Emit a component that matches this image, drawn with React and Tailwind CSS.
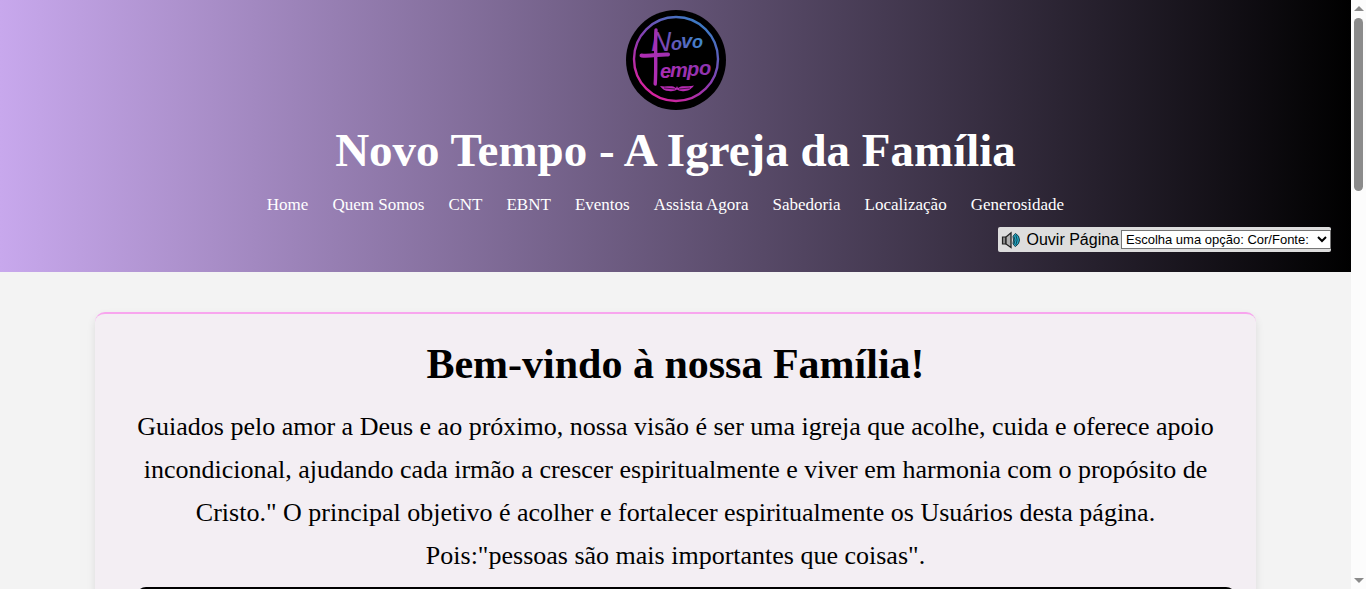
const links = [
  'Home',
  'Quem Somos',
  'CNT',
  'EBNT',
  'Eventos',
  'Assista Agora',
  'Sabedoria',
  'Localização',
  'Generosidade',
];

function Logo() {
  return (
    <svg viewBox="0 0 100 100" className="size-[100px]" role="img" aria-label="Novo Tempo">
      <defs>
        <linearGradient id="ring" gradientUnits="userSpaceOnUse" x1="28" y1="92" x2="78" y2="14">
          <stop offset="0" stopColor="#e0209c" />
          <stop offset="0.5" stopColor="#8a3bb0" />
          <stop offset="1" stopColor="#3a7cc4" />
        </linearGradient>
        <linearGradient id="novo" gradientUnits="userSpaceOnUse" x1="28" y1="44" x2="74" y2="28">
          <stop offset="0" stopColor="#9a2fae" />
          <stop offset="0.45" stopColor="#6458b8" />
          <stop offset="1" stopColor="#3f86cc" />
        </linearGradient>
        <linearGradient id="tempo" gradientUnits="userSpaceOnUse" x1="20" y1="80" x2="82" y2="46">
          <stop offset="0" stopColor="#b82bb4" />
          <stop offset="1" stopColor="#8a35ae" />
        </linearGradient>
      </defs>
      <circle cx="50" cy="50" r="50" fill="#000" />
      <circle cx="50" cy="49" r="42" fill="none" stroke="url(#ring)" strokeWidth="2.4" />
      <g fontFamily="'Liberation Sans',Arial,sans-serif" fontStyle="italic" fontWeight="700">
        <text fill="url(#novo)" fontSize="18">
          <tspan x="25" y="41" fontSize="28" fontWeight="400">N</tspan>
          <tspan x="45" y="40">o</tspan>
          <tspan x="55" y="38" fontSize="20">v</tspan>
          <tspan x="66" y="38">o</tspan>
        </text>
        <text fill="url(#tempo)" fontSize="20">
          <tspan x="34" y="68">e</tspan>
          <tspan x="44" y="67">m</tspan>
          <tspan x="61" y="66">p</tspan>
          <tspan x="73" y="65">o</tspan>
        </text>
      </g>
      <g stroke="url(#tempo)" fill="none" strokeLinecap="round">
        <path d="M30 20 C29 32 30.500 58 29.200 74" strokeWidth="3.4" />
        <path d="M15.500 45.500 C24 46.600 34 44 42 44.500" strokeWidth="4" />
      </g>
      <path
        d="M34 76 C40 77.500 46 74.500 50 78 L51 76 L52 78 C56 74.500 62 77.500 68 75.500 C66 78 63 81 59 81 C56 81.500 53 81 51 79.500 C49 81 46 81.500 43 81 C39 81 36 79 34 76 Z"
        fill="#b82bb4"
      />
      <path d="M38 78 L49 79 M64 78 L53 79" stroke="#000" strokeWidth="0.6" />
    </svg>
  );
}

function Speaker() {
  return (
    <svg viewBox="0 0 20 18" className="h-[18px] w-5" aria-hidden="true">
      <path d="M1.500 6 H5 V13 H1.500 Z" fill="#8c8c8c" stroke="#222" strokeWidth="1.2" />
      <path d="M5 6 L10 1.800 V16.500 L5 13 Z" fill="#b0b0b0" stroke="#222" strokeWidth="1.3" />
      <path
        d="M12 5.500 Q13 9 12 12.500 Q13 15 14.500 15.500 Q18.500 13 18.500 9 Q18.500 4.500 14.500 2.500 Q13 3.500 12 5.500 Z"
        fill="#22a8c4"
        stroke="#12303a"
        strokeWidth="0.9"
      />
      <path d="M13 5.500 Q15 9 13 13 M14.800 4 Q17.500 9 14.800 14" fill="none" stroke="#0b3440" strokeWidth="0.8" />
    </svg>
  );
}

function ScrollRail() {
  return (
    <div className="flex w-[15px] shrink-0 flex-col items-center bg-[#fcfcfc] py-[6px]" aria-hidden="true">
      <svg viewBox="0 0 10 5" className="h-[5px] w-[10px]">
        <path d="M5 0 L10 5 H0 Z" fill="#8b8b8b" />
      </svg>
      <div className="mt-[7px] h-[30%] w-[9px] rounded-full bg-[#8b8b8b]" />
      <svg viewBox="0 0 10 5" className="mt-auto h-[5px] w-[10px]">
        <path d="M0 0 H10 L5 5 Z" fill="#8b8b8b" />
      </svg>
    </div>
  );
}

export default function App() {
  return (
    <div className="flex h-screen bg-[#f3f3f3] font-[Georgia,'Liberation_Serif',serif] text-black">
      <div className="min-w-0 flex-1 overflow-hidden">
        <header className="bg-[linear-gradient(to_right,#c8a8ed,#000)] px-5 pt-[10px] pb-5 text-white">
          <div className="flex flex-col items-center">
            <Logo />
            <h1 className="mt-4 text-center text-[47px] leading-[48px] font-bold">Novo Tempo - A Igreja da Família</h1>
            <nav className="mt-[21px] pr-5">
              <ul className="flex flex-wrap justify-center gap-6 text-[17px] leading-5">
                {links.map((label) => (
                  <li key={label}>
                    <a href="#inicio">{label}</a>
                  </li>
                ))}
              </ul>
            </nav>
          </div>
          <div className="mt-3 flex justify-end font-['Liberation_Sans',Arial,sans-serif] text-black">
            <div className="flex h-[25px] items-center rounded-[2px] bg-[#dddddd] pl-[3px]">
              <button type="button" className="flex items-center gap-[6px] text-[16px] leading-5">
                <Speaker />
                Ouvir Página
              </button>
              <select
                aria-label="Cor e fonte"
                className="ml-[2px] h-[19px] w-[210px] appearance-auto border border-[#767676] bg-white text-[13px]"
              >
                <option>Escolha uma opção: Cor/Fonte:</option>
              </select>
            </div>
          </div>
        </header>
        <main
          id="inicio"
          className="mx-auto mt-10 w-[86%] rounded-[10px] border-t-2 border-[#f8a5ee] bg-[#f3eef3] px-5 pt-7 text-center shadow-[0_4px_8px_rgba(0,0,0,0.1)]"
        >
          <h2 className="text-[42px] leading-[44px] font-bold">Bem-vindo à nossa Família!</h2>
          <p className="mt-[19px] text-[26px] leading-[43px]">
            Guiados pelo amor a Deus e ao próximo, nossa visão é ser uma igreja que acolhe, cuida e oferece apoio
            <br />
            incondicional, ajudando cada irmão a crescer espiritualmente e viver em harmonia com o propósito de
            <br />
            Cristo." O principal objetivo é acolher e fortalecer espiritualmente os Usuários desta página.
            <br />
            Pois:"pessoas são mais importantes que coisas".
          </p>
          <div className="mt-[10px] ml-[21px] h-[400px] rounded-[10px] bg-black" />
        </main>
      </div>
      <ScrollRail />
    </div>
  );
}
